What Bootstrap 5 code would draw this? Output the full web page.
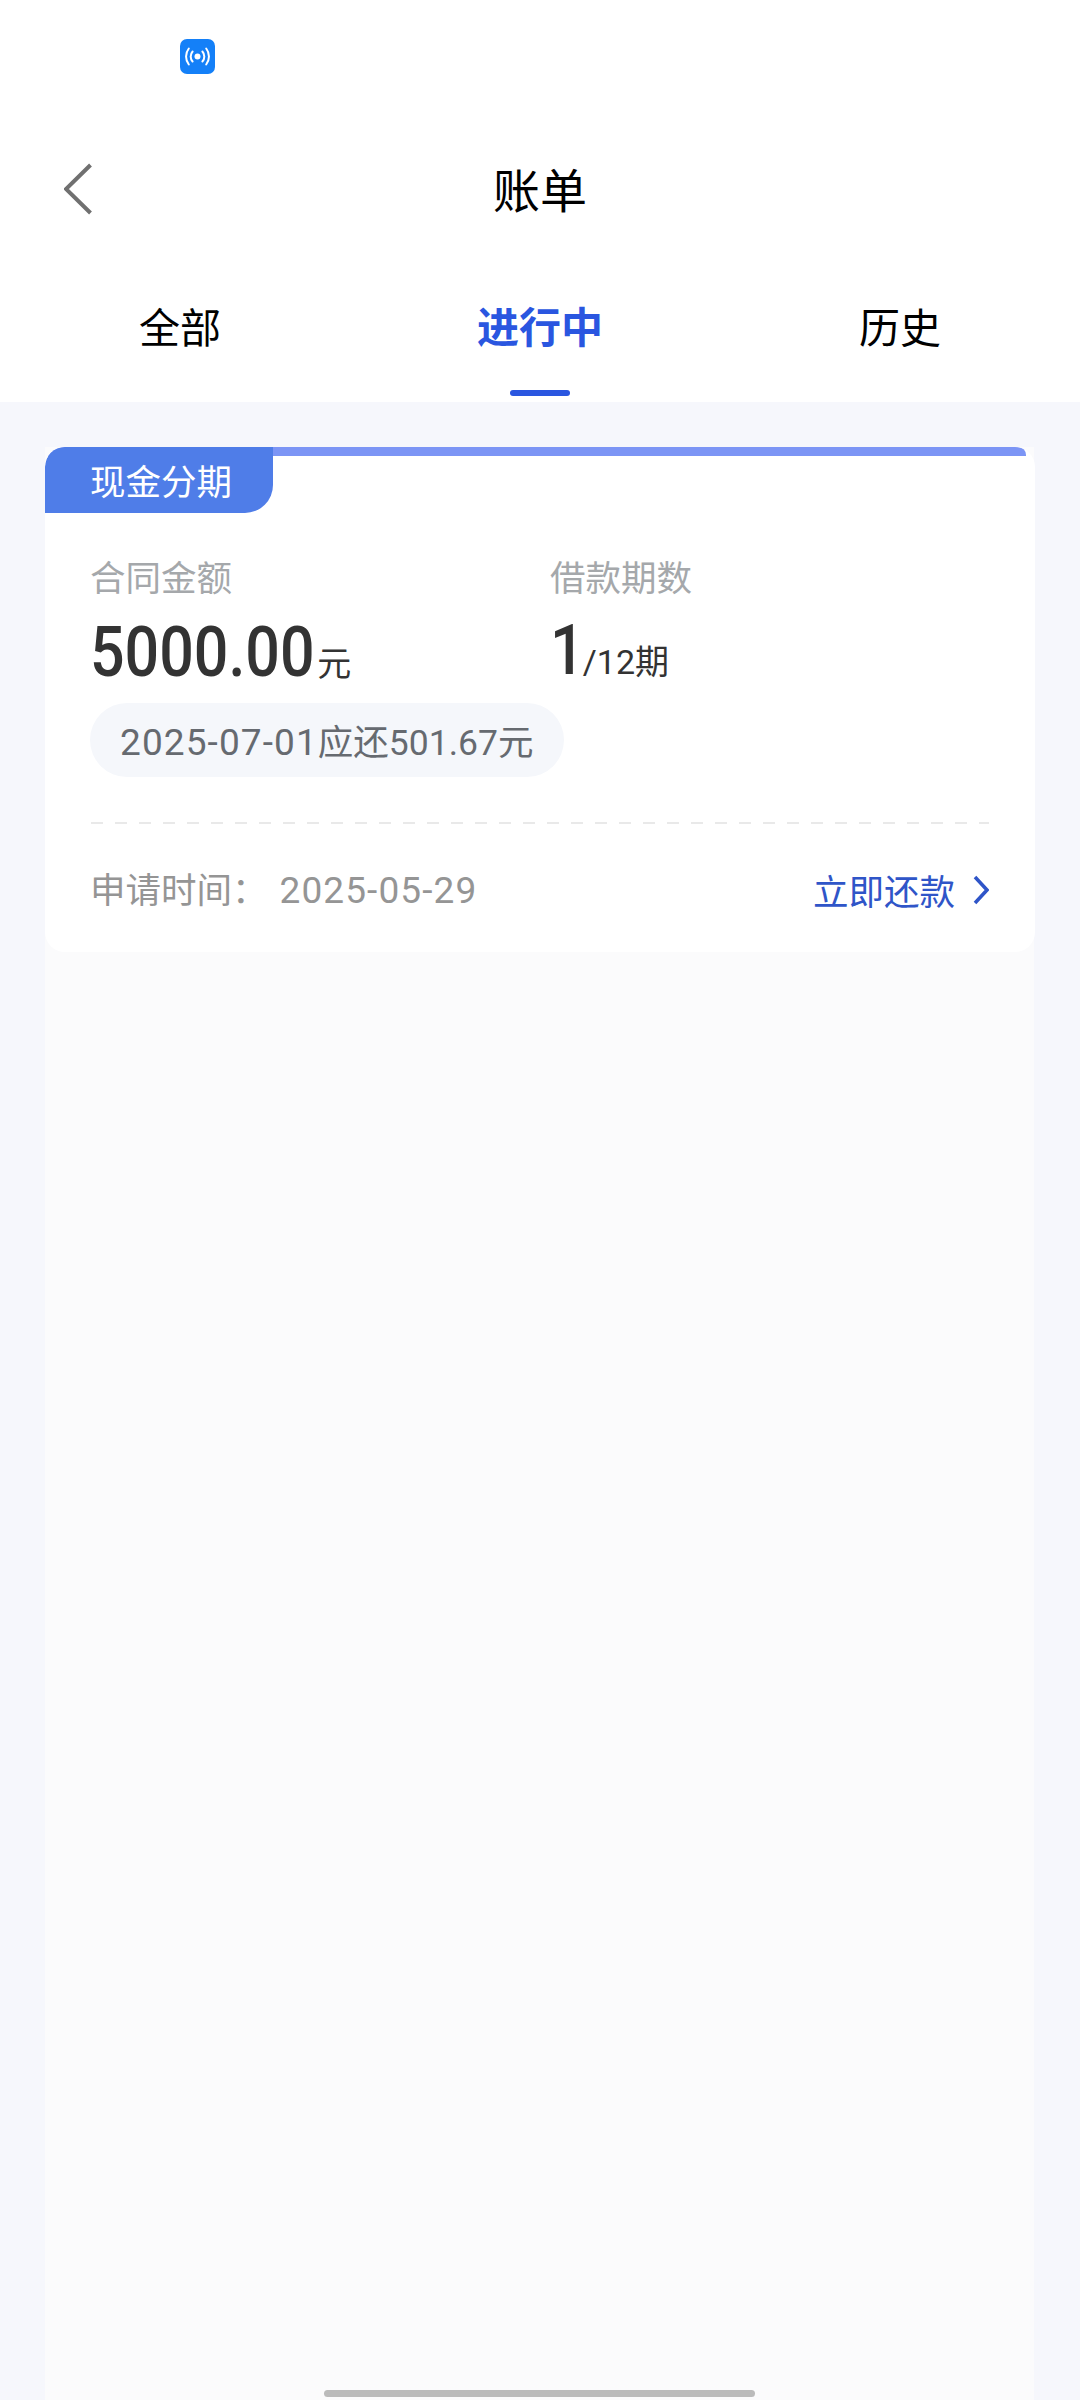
<!DOCTYPE html>
<html lang="zh-CN">
  <head>
    <meta charset="UTF-8" />
    <meta name="viewport" content="width=device-width, initial-scale=1.0" />
    <title>账单</title>
    <link
      rel="stylesheet"
      href="https://cdn.jsdelivr.net/npm/bootstrap@5.3.0/dist/css/bootstrap.min.css"
    />
    <style>
      body {
        background: #f6f7fc;
        font-family: "Noto Sans CJK SC", sans-serif;
        height: 2400px;
        overflow: hidden;
      }
      #page-head {
        background: #fff;
        height: 402px;
      }
      #status-bar {
        height: 142px;
        padding: 39px 0 0 180px;
      }
      .nfc-icon {
        display: block;
        width: 35px;
        height: 35px;
      }
      #title-bar {
        height: 92px;
        padding: 0 64px;
      }
      #title-bar h1 {
        font-size: 47px;
        font-weight: 400;
        color: #000;
        margin: 0;
        line-height: 92px;
      }
      .back-btn {
        left: 64px;
        top: 21px;
      }
      #tab-row {
        height: 168px;
      }
      .tab-item {
        font-size: 41px;
        line-height: 60px;
        color: #000;
        padding-top: 61px;
      }
      .tab-active {
        color: #2a56e0;
        font-size: 42px;
        font-weight: 700;
      }
      .tab-active::after {
        content: "";
        position: absolute;
        left: 50%;
        top: 156px;
        width: 60px;
        height: 6px;
        margin-left: -30px;
        border-radius: 3px;
        background: #2a56e0;
      }
      #bill-panel {
        background: #fbfbfc;
        margin: 45px 46px 0 45px;
        height: 1953px;
      }
      .bill-card {
        background: #fff;
        border-radius: 20px;
        height: 505px;
        width: 990px;
        position: relative;
      }
      .bill-top-line {
        height: 9px;
        background: #7c95f5;
        margin-right: 9px;
        border-radius: 0 8px 0 0;
      }
      .bill-tag {
        position: absolute;
        left: 0;
        top: 0;
        width: 228px;
        height: 66px;
        background: #4f7de8;
        color: #fff;
        font-size: 35.5px;
        line-height: 66px;
        padding-left: 45px;
        border-radius: 20px 0 28px 0;
      }
      .bill-body {
        padding: 95px 46px 0 45px;
      }
      .info-col-1 {
        width: 460px;
      }
      .info-label {
        font-size: 35.5px;
        line-height: 50px;
        color: #a5a8ab;
      }
      .info-value {
        color: #333;
        height: 102px;
        line-height: 103px;
        white-space: nowrap;
      }
      .info-value-term {
        line-height: 98px;
      }
      .num-big {
        display: inline-block;
        font-family: Roboto, sans-serif;
        font-weight: 500;
        font-size: 70px;
        transform: scaleX(0.87);
        transform-origin: left;
      }
      .num-amount {
        margin-right: -31px;
      }
      .num-term {
        margin-right: -7px;
      }
      .num-unit {
        font-size: 34px;
      }
      .num-unit-latin {
        font-family: Roboto, "Noto Sans CJK SC", sans-serif;
        font-size: 34px;
      }
      .due-pill {
        display: inline-block;
        background: #f5f7fb;
        border-radius: 37px;
        height: 74px;
        line-height: 74px;
        padding: 0 31px 0 30px;
        font-size: 35.5px;
        color: #666a70;
        white-space: nowrap;
      }
      .latin-num {
        font-family: Roboto, "Noto Sans CJK SC", sans-serif;
      }
      .date-num {
        font-size: 37px;
        letter-spacing: 1.1px;
      }
      .dash-line {
        height: 2px;
        margin-top: 45px;
        margin-left: 1px;
        width: 898px;
        background: repeating-linear-gradient(to right, #e9e9e9 0 12px, transparent 12px 24px);
      }
      .bill-foot {
        margin-top: 39px;
        font-size: 35.5px;
        line-height: 50px;
        width: 899px;
      }
      .apply-time {
        color: #959595;
      }
      .apply-time .latin-num {
        margin-left: 12px;
      }
      .pay-link {
        color: #2f55c8;
      }
      .pay-arrow {
        display: block;
        width: 16px;
        height: 30px;
        margin-left: 18px;
      }
      #home-bar {
        left: 324px;
        top: 2390px;
        width: 431px;
        height: 7px;
        background: #bbb;
        border-radius: 4px;
      }
    </style>
  </head>
  <body>
    <!-- header -->
    <div id="page-head">
      <div id="status-bar">
        <svg class="nfc-icon" viewBox="0 0 35 35">
          <rect width="35" height="35" rx="7" fill="#1480f8" />
          <circle cx="17.5" cy="17.5" r="3" fill="#fff" />
          <g fill="none" stroke="#fff" stroke-width="2" stroke-linecap="round">
            <path d="M12.6 12.5a7.5 7.5 0 0 0 0 10" />
            <path d="M22.4 12.5a7.5 7.5 0 0 1 0 10" />
            <path d="M8.8 9.5a13 13 0 0 0 0 16" />
            <path d="M26.2 9.5a13 13 0 0 1 0 16" />
          </g>
        </svg>
      </div>
      <div id="title-bar" class="position-relative text-center">
        <svg class="back-btn position-absolute" width="28" height="52" viewBox="0 0 28 52">
          <path d="M26.5 2 2 26l24.5 24" fill="none" stroke="#707070" stroke-width="4" />
        </svg>
        <h1>账单</h1>
      </div>
      <div id="tab-row" class="row g-0 text-center">
        <div class="col-4 tab-item position-relative">
          <span class="tab-text">全部</span>
        </div>
        <div class="col-4 tab-item tab-active position-relative">
          <span class="tab-text">进行中</span>
        </div>
        <div class="col-4 tab-item position-relative">
          <span class="tab-text">历史</span>
        </div>
      </div>
    </div>

    <!-- bill list -->
    <div id="bill-panel">
      <div class="bill-card overflow-hidden">
        <div class="bill-top-line"></div>
        <div class="bill-tag">现金分期</div>
        <div class="bill-body">
          <div class="d-flex">
            <div class="info-col-1">
              <div class="info-label">合同金额</div>
              <div class="info-value">
                <span class="num-big num-amount">5000.00</span><span class="num-unit">元</span>
              </div>
            </div>
            <div>
              <div class="info-label">借款期数</div>
              <div class="info-value info-value-term">
                <span class="num-big num-term">1</span><span class="num-unit-latin">/12期</span>
              </div>
            </div>
          </div>
          <div class="due-pill">
            <span class="latin-num date-num">2025-07-01</span>应还<span class="latin-num">501.67</span>元
          </div>
          <div class="dash-line"></div>
          <div class="bill-foot d-flex justify-content-between align-items-center">
            <div class="apply-time">申请时间：<span class="latin-num date-num">2025-05-29</span></div>
            <div class="pay-link d-flex align-items-center">
              立即还款
              <svg class="pay-arrow" viewBox="0 0 16 30">
                <path d="M2 2l12 13L2 28" fill="none" stroke="#2f55c8" stroke-width="3.5" />
              </svg>
            </div>
          </div>
        </div>
      </div>
    </div>
    <div id="home-bar" class="position-absolute"></div>

    <script src="https://cdn.jsdelivr.net/npm/bootstrap@5.3.0/dist/js/bootstrap.bundle.min.js"></script>
  </body>
</html>
